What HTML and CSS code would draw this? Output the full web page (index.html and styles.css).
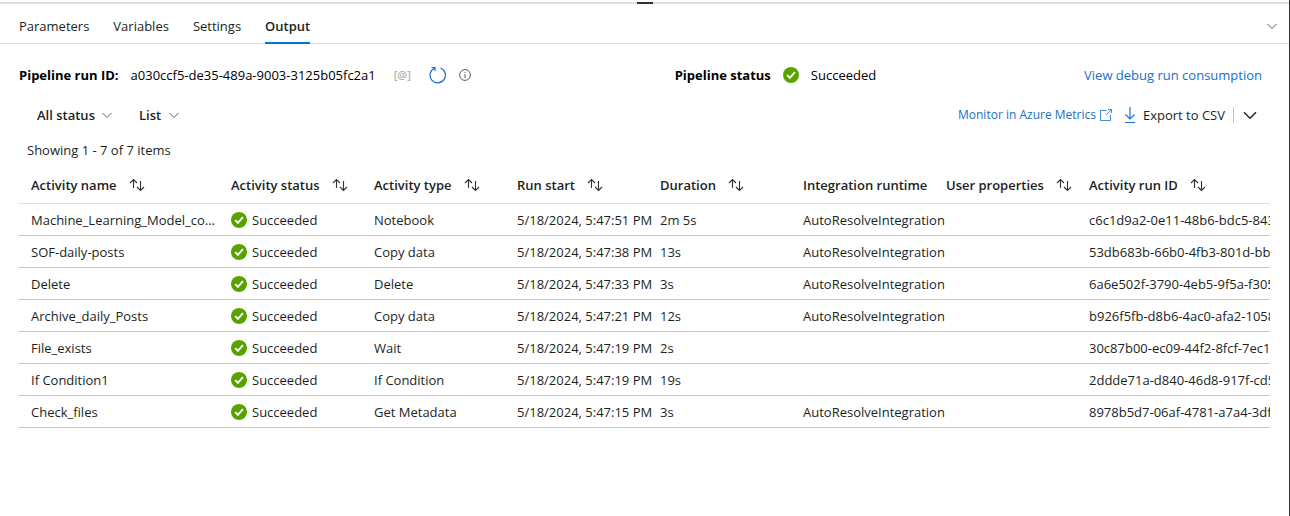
FILE: index.html
```html
<!DOCTYPE html>
<html lang="en">
<head>
<meta charset="utf-8">
<title>Pipeline output</title>
<link rel="stylesheet" href="styles.css">
</head>
<body>
<svg class="defs" aria-hidden="true">
  <symbol id="check" viewBox="0 0 16 16"><circle cx="8" cy="8" r="8" fill="#57a300"/><path d="M4.2 8.2 6.9 10.9 11.9 5.2" fill="none" stroke="#fff" stroke-width="1.9"/></symbol>
  <symbol id="sort" viewBox="0 0 16 14"><path d="M4.500 10V1.500M1 5l3.500-3.500L8 5M11.500 3v9.500M8 9l3.500 3.500L15 9" fill="none" stroke="#323130" stroke-width="1.1"/></symbol>
  <symbol id="chevron" viewBox="0 0 12 12"><path d="M1.500 4 6 8.500 10.500 4" fill="none" stroke="currentColor" stroke-width="1"/></symbol>
</svg>
<main class="panel">
  <div class="splitter"><span class="handle"></span></div>
  <nav class="tabs" role="tablist">
    <button class="tab" role="tab">Parameters</button>
    <button class="tab" role="tab">Variables</button>
    <button class="tab" role="tab">Settings</button>
    <button class="tab active" role="tab" aria-selected="true">Output</button>
    <button class="icon-button collapse" aria-label="Collapse panel"><svg class="chevron"><use href="#chevron"/></svg></button>
  </nav>
  <section class="summary">
    <div class="run">
      <strong>Pipeline run ID:</strong>
      <span class="run-id">a030ccf5-de35-489a-9003-3125b05fc2a1</span>
      <span class="param">[@]</span>
      <button class="icon-button" aria-label="Refresh"><svg class="refresh" viewBox="0 0 18 18"><path d="M11.500 2A7.700 7.700 0 1 1 5.500 2.200M2.500 1.500H6V5" fill="none" stroke="#1a6fc9" stroke-width="1.200"/></svg></button>
      <button class="icon-button" aria-label="Information"><svg class="info" viewBox="0 0 12 12"><circle cx="6" cy="6" r="5.400" fill="none" stroke="#605e5c"/><path d="M6 5v4M6 3v1.100" stroke="#605e5c"/></svg></button>
    </div>
    <div class="status">
      <strong>Pipeline status</strong>
      <svg class="check"><use href="#check"/></svg>
      <span>Succeeded</span>
    </div>
    <a class="link" href="#consumption">View debug run consumption</a>
  </section>
  <section class="toolbar">
    <div class="filter"><select class="select" aria-label="Status filter"><option>All status</option></select><svg class="chevron"><use href="#chevron"/></svg></div>
    <div class="filter"><select class="select" aria-label="View"><option>List</option></select><svg class="chevron"><use href="#chevron"/></svg></div>
    <div class="actions">
      <a class="link monitor" href="#metrics">Monitor in Azure Metrics
        <svg class="external" viewBox="0 0 12 12"><path d="M6.500 1.500h-6v10h10V6M6 6l5.500-5.500M8 .5h3.500V4" fill="none" stroke="currentColor" stroke-width=".8"/></svg></a>
      <button class="export"><svg class="download" viewBox="0 0 12 16"><path d="M6 0v12M1.500 7.500 6 12l4.500-4.500M1 15.500h10" fill="none" stroke="#1a6fc9" stroke-width="1.200"/></svg>Export to CSV</button>
      <button class="icon-button more" aria-label="More export options"><svg class="chevron-large"><use href="#chevron"/></svg></button>
    </div>
  </section>
  <p class="count">Showing 1 - 7 of 7 items</p>
  <div class="grid">
    <table class="activities">
      <colgroup><col class="col-name"><col class="col"><col class="col"><col class="col"><col class="col"><col class="col"><col class="col"><col></colgroup>
      <thead>
        <tr>
          <th><button class="sort">Activity name<svg class="sort-icon"><use href="#sort"/></svg></button></th>
          <th><button class="sort">Activity status<svg class="sort-icon"><use href="#sort"/></svg></button></th>
          <th><button class="sort">Activity type<svg class="sort-icon"><use href="#sort"/></svg></button></th>
          <th><button class="sort">Run start<svg class="sort-icon"><use href="#sort"/></svg></button></th>
          <th><button class="sort">Duration<svg class="sort-icon"><use href="#sort"/></svg></button></th>
          <th>Integration runtime</th>
          <th><button class="sort">User properties<svg class="sort-icon"><use href="#sort"/></svg></button></th>
          <th><button class="sort">Activity run ID<svg class="sort-icon"><use href="#sort"/></svg></button></th>
        </tr>
      </thead>
      <tbody>
        <tr><td>Machine_Learning_Model_co...</td><td><span class="state"><svg class="check"><use href="#check"/></svg>Succeeded</span></td><td>Notebook</td><td>5/18/2024, 5:47:51 PM</td><td>2m 5s</td><td>AutoResolveIntegration</td><td></td><td>c6c1d9a2-0e11-48b6-bdc5-843a</td></tr>
        <tr><td>SOF-daily-posts</td><td><span class="state"><svg class="check"><use href="#check"/></svg>Succeeded</span></td><td>Copy data</td><td>5/18/2024, 5:47:38 PM</td><td>13s</td><td>AutoResolveIntegration</td><td></td><td>53db683b-66b0-4fb3-801d-bbd</td></tr>
        <tr><td>Delete</td><td><span class="state"><svg class="check"><use href="#check"/></svg>Succeeded</span></td><td>Delete</td><td>5/18/2024, 5:47:33 PM</td><td>3s</td><td>AutoResolveIntegration</td><td></td><td>6a6e502f-3790-4eb5-9f5a-f305b</td></tr>
        <tr><td>Archive_daily_Posts</td><td><span class="state"><svg class="check"><use href="#check"/></svg>Succeeded</span></td><td>Copy data</td><td>5/18/2024, 5:47:21 PM</td><td>12s</td><td>AutoResolveIntegration</td><td></td><td>b926f5fb-d8b6-4ac0-afa2-10589</td></tr>
        <tr><td>File_exists</td><td><span class="state"><svg class="check"><use href="#check"/></svg>Succeeded</span></td><td>Wait</td><td>5/18/2024, 5:47:19 PM</td><td>2s</td><td></td><td></td><td>30c87b00-ec09-44f2-8fcf-7ec17</td></tr>
        <tr><td>If Condition1</td><td><span class="state"><svg class="check"><use href="#check"/></svg>Succeeded</span></td><td>If Condition</td><td>5/18/2024, 5:47:19 PM</td><td>19s</td><td></td><td></td><td>2ddde71a-d840-46d8-917f-cd5</td></tr>
        <tr><td>Check_files</td><td><span class="state"><svg class="check"><use href="#check"/></svg>Succeeded</span></td><td>Get Metadata</td><td>5/18/2024, 5:47:15 PM</td><td>3s</td><td>AutoResolveIntegration</td><td></td><td>8978b5d7-06af-4781-a7a4-3dfc</td></tr>
      </tbody>
    </table>
  </div>
</main>
</body>
</html>
```

FILE: styles.css
```css
* { box-sizing: border-box; }
body {
  margin: 0;
  background: #fff;
  color: #201f1e;
  font: 13px/20px "Segoe UI", "Open Sans", sans-serif;
}
button, select {
  margin: 0;
  padding: 0;
  border: 0;
  background: none;
  color: inherit;
  font: inherit;
}
svg { flex: none; }
.defs { display: none; }
.panel {
  min-height: 100vh;
  padding-top: 2px;
  border-right: 1px solid #323130;
}
.splitter {
  display: flex;
  justify-content: center;
  height: 2px;
  background: #e1dfdd;
}
.handle { width: 16px; background: #323130; }
.tabs {
  display: flex;
  gap: 24px;
  height: 40px;
  padding: 0 11px 0 19px;
  border-bottom: 1px solid #e1dfdd;
}
.tab { height: 40px; padding-top: 6px; border-bottom: 2px solid transparent; }
.active { border-color: #0078d4; font-weight: 600; }
.icon-button { display: flex; align-items: center; justify-content: center; }
.collapse { margin-left: auto; padding-top: 4px; }
.chevron { width: 12px; height: 12px; color: #605e5c; }
.chevron-large { width: 16px; height: 16px; }
.summary {
  display: grid;
  grid-template-columns: 655fr 409fr auto;
  align-items: center;
  height: 62px;
  padding: 0 27px 0 19px;
}
.run, .status { display: flex; align-items: center; color: #000; }
.run-id { margin: 0 18px 0 12px; }
.param { margin-right: 18px; color: #b3b0ad; font-size: 11px; font-weight: 600; }
.refresh { width: 18px; height: 18px; margin-right: 12px; }
.info { width: 12px; height: 12px; }
.status { gap: 12px; }
.link { color: #1a6fc9; text-decoration: none; }
.toolbar {
  display: flex;
  align-items: center;
  gap: 26px;
  height: 18px;
  padding: 0 31px 0 37px;
}
.filter { position: relative; display: flex; align-items: center; font-weight: 600; }
.select { padding-right: 18px; appearance: none; }
.filter .chevron { position: absolute; right: 0; pointer-events: none; }
.actions { display: flex; align-items: center; margin-left: auto; }
.monitor { display: flex; align-items: center; gap: 4px; margin-right: 12px; font-size: 12px; }
.external { width: 12px; height: 12px; }
.export { display: flex; align-items: center; gap: 7px; padding-right: 8px; }
.download { width: 12px; height: 16px; }
.more { height: 16px; padding-left: 8px; border-left: 1px solid #c8c6c4; }
.count { margin: 16px 0 6px 27px; }
.grid { margin: 0 19px; overflow: hidden; }
.activities { width: 100%; border-collapse: separate; border-spacing: 0; table-layout: fixed; }
.col-name { width: 200px; }
.col { width: 143px; }
th, td {
  height: 32px;
  padding: 0 0 0 12px;
  border-bottom: 1px solid #c8c6c4;
  text-align: left;
  white-space: nowrap;
}
th { height: 38px; border-color: #e1dfdd; font-weight: 600; }
.sort { display: flex; align-items: center; gap: 12px; }
.sort-icon { width: 16px; height: 14px; }
.state { display: flex; align-items: center; gap: 5px; }
.check { width: 16px; height: 16px; }
```
